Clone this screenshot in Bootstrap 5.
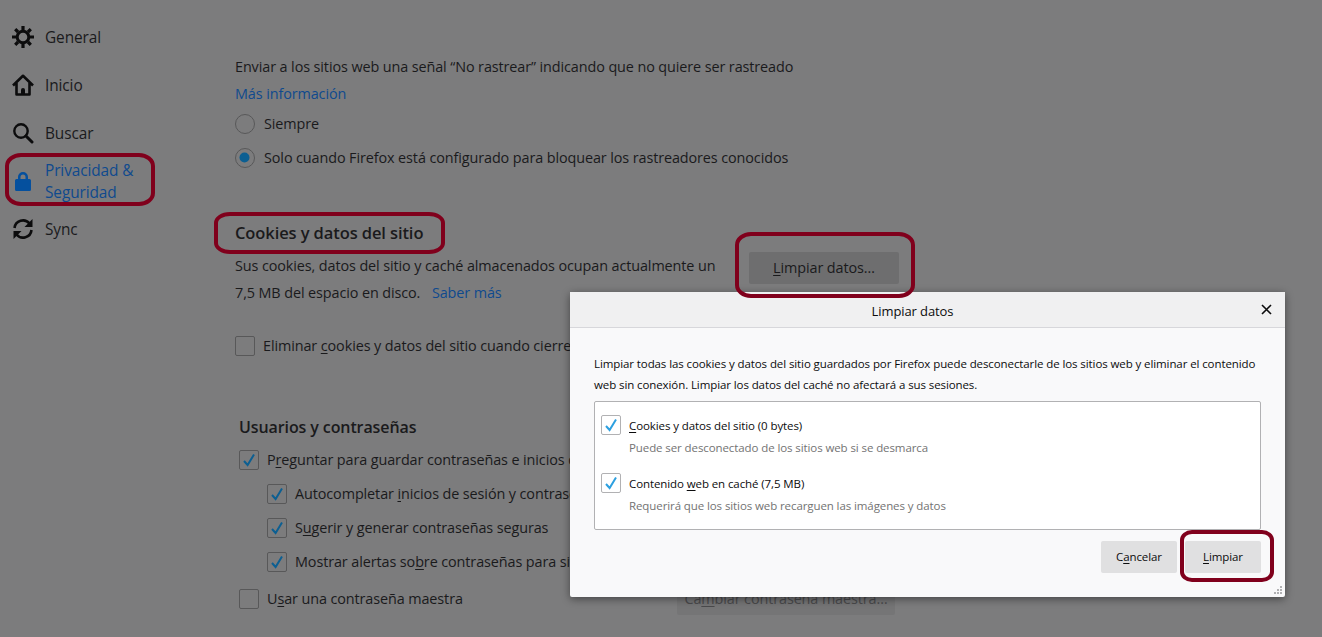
<!DOCTYPE html>
<html lang="es">
<head>
  <meta charset="UTF-8">
  <title>Limpiar datos</title>
  <link href="https://cdn.jsdelivr.net/npm/bootstrap@5.3.0/dist/css/bootstrap.min.css" rel="stylesheet">
  <style>
    html, body { height: 100%; }
    body { background: #7c7c7d; color: #1a1a1c; font: 14.4px/26px "Open Sans", "Liberation Sans", sans-serif; letter-spacing: -.1px; overflow: hidden; }
    a { text-decoration: none; color: #0f4a8e; }
    u { text-underline-offset: 2px; }

    /* sidebar */
    .side-col { width: 235px; padding-top: 13px; flex: none; font-size: 15.400px; }
    .side-item { padding-left: 12px; height: 48px; gap: 11px; }
    .side-item svg { width: 22px; height: 22px; flex: none; }
    .side-item span { padding-top: 2px; }
    .side-item.is-active { height: 46px; margin: 1px 0; color: #0f4a8e; line-height: 22px; }

    /* main column */
    .main-col { padding-top: 54px; width: 700px; flex: none; }
    .line-r { height: 26px; }
    .line-top { height: 27px; }
    .opt-r { height: 34px; gap: 9px; }
    .head-r { height: 30px; font-size: 16.500px; font-weight: 600; margin-top: 45px; margin-bottom: 3px; }
    .store-r { width: 664px; }
    .erase-r { margin-top: 23px; }
    .sec-users { padding-left: 4px; margin-top: 50px; width: 660px; }
    .sec-users .head-r { margin: 0; font-size: 16px; padding-top: 1px; }
    .sub-r { padding-left: 28px; }
    .master-r { margin-top: 3px; }
    .master-l { gap: 9px; }
    .plain-btn { background: #6e6e6f; border-radius: 2px; height: 32px; line-height: 32px; text-align: center; }
    .btn-clear { width: 150px; margin-top: -1px; }
    .btn-master { width: 218px; background: #757576; color: #4a4a4c; }

    /* checkbox and radio */
    .form-check-input.tick { width: 20px; height: 20px; margin: 0 -1px 0 0; flex: none; border: 1px solid #585859; border-radius: 2px; background-color: transparent; box-shadow: none; }
    .form-check-input.tick:checked { background-color: transparent; background-size: 18px; background-image: url("data:image/svg+xml,%3Csvg xmlns='http://www.w3.org/2000/svg' viewBox='0 0 18 18'%3E%3Cpath d='M4 10l3.600 4L14 3.500' fill='none' stroke='%230c5f92' stroke-width='2'/%3E%3C/svg%3E"); }
    .form-check-input.dot { width: 20px; height: 20px; margin: 0; flex: none; border: 1px solid #585859; background-color: transparent; background-image: none; box-shadow: none; }
    .form-check-input.dot:checked { background-color: transparent; background-size: 20px; background-image: url("data:image/svg+xml,%3Csvg xmlns='http://www.w3.org/2000/svg' viewBox='0 0 20 20'%3E%3Ccircle cx='9.500' cy='9.500' r='5' fill='%230c5f92'/%3E%3C/svg%3E"); }

    /* dialog */
    .clear-dialog { position: absolute; left: 570px; top: 292px; width: 715px; height: 305px; background: #f9f9fa; color: #0c0c0d; box-shadow: 0 2px 8px rgba(0, 0, 0, .45); border-radius: 2px; font-size: 11.500px; line-height: 21px; letter-spacing: -.095px; }
    .dlg-title { height: 36px; padding: 3px 30px 0 0; background: #f0f0f1; border-bottom: 1px solid #d7d7db; font-size: 13px; font-weight: 500; }
    .dlg-close { position: absolute; right: 13px; top: 12px; width: 11px; height: 11px; }
    .dlg-body { padding: 25px 24px 0; }
    .dlg-box { height: 129px; margin-top: 6px; padding: 12px 6px 0; background: #fff; border: 1px solid #b1b1b3; border-radius: 2px; }
    .dlg-opt { gap: 8px; height: 22px; margin-bottom: 1px; }
    .dlg-note { padding-left: 28px; height: 22px; color: #737373; margin-bottom: 13px; }
    .dlg-box .form-check-input.tick { border-color: #b1b1b3; margin-right: 0; }
    .dlg-box .form-check-input.tick:checked { background-image: url("data:image/svg+xml,%3Csvg xmlns='http://www.w3.org/2000/svg' viewBox='0 0 18 18'%3E%3Cpath d='M4 10l3.600 4L14 3.500' fill='none' stroke='%232da0e0' stroke-width='2'/%3E%3C/svg%3E"); }
    .dlg-foot { gap: 8px; margin-top: 11px; }
    .dlg-btn { width: 76px; height: 32px; line-height: 32px; text-align: center; background: #e0e0e1; border-radius: 2px; }
    .dlg-grip { position: absolute; right: 2px; bottom: 2px; width: 10px; height: 10px; }

    /* red marks drawn on the capture */
    .red-mark { position: absolute; border: 4px solid #80001c; }
    .mark-side { left: 5px; top: 153px; width: 150px; height: 53px; border-radius: 16px / 13px; }
    .mark-head { left: 214px; top: 212px; width: 231px; height: 42px; border-radius: 16px / 11px; }
    .mark-clear { left: 735px; top: 232px; width: 180px; height: 66px; border-radius: 16px / 13px; }
    .mark-ok { left: 1180px; top: 530px; width: 94px; height: 52px; border-radius: 12px / 10px; }
  </style>
</head>
<body>
  <div class="d-flex">
    <!-- menu lateral -->
    <div class="side-col">
      <div class="side-item d-flex align-items-center">
        <svg viewBox="0 0 22 22"><circle cx="11" cy="11" r="5.800" fill="none" stroke="#0c0c0d" stroke-width="3"/><path stroke="#0c0c0d" stroke-width="3.200" d="M11 0v4M11 18v4M0 11h4M18 11h4M3.200 3.200 6 6M16 16l2.800 2.800M18.800 3.200 16 6M6 16l-2.800 2.800"/></svg>
        <span>General</span>
      </div>
      <div class="side-item d-flex align-items-center">
        <svg viewBox="0 0 22 22"><path fill="none" stroke="#0c0c0d" stroke-width="2.600" stroke-linejoin="round" d="M1 11.500 11 1.800l10 9.700M4.500 9v11.500h13V9"/><path fill="#0c0c0d" d="M9 21v-5a2 2 0 0 1 4 0v5z"/></svg>
        <span>Inicio</span>
      </div>
      <div class="side-item d-flex align-items-center">
        <svg viewBox="0 0 22 22"><circle cx="9" cy="9" r="6.700" fill="none" stroke="#0c0c0d" stroke-width="2.400"/><path stroke="#0c0c0d" stroke-width="3" stroke-linecap="round" d="m14 14 6 6"/></svg>
        <span>Buscar</span>
      </div>
      <div class="side-item is-active d-flex align-items-center">
        <svg viewBox="0 0 22 22"><path fill="#05509e" d="M6 9V7a5 5 0 0 1 10 0v2h1.500A1.500 1.500 0 0 1 19 10.500v9a1.500 1.500 0 0 1-1.500 1.500h-13A1.500 1.500 0 0 1 3 19.500v-9A1.500 1.500 0 0 1 4.500 9zm2.500 0h5V7a2.500 2.500 0 0 0-5 0z"/></svg>
        <span>Privacidad &amp;<br>Seguridad</span>
      </div>
      <div class="side-item d-flex align-items-center">
        <svg viewBox="0 0 22 22"><path fill="none" stroke="#0c0c0d" stroke-width="2.600" d="M2.500 10a8.500 8.500 0 0 1 15-4.500M19.500 12a8.500 8.500 0 0 1-15 4.500"/><path fill="#0c0c0d" d="M20.500 1v8h-8zM1.500 21v-8h8z"/></svg>
        <span>Sync</span>
      </div>
    </div>

    <!-- contenido -->
    <div class="main-col">
      <div class="line-top">Enviar a los sitios web una señal “No rastrear” indicando que no quiere ser rastreado</div>
      <div class="line-r"><a href="#">Más información</a></div>
      <div class="opt-r d-flex align-items-center">
        <input class="form-check-input dot" type="radio" name="dnt">
        <span>Siempre</span>
      </div>
      <div class="opt-r d-flex align-items-center">
        <input class="form-check-input dot" type="radio" name="dnt" checked>
        <span>Solo cuando Firefox está configurado para bloquear los rastreadores conocidos</span>
      </div>

      <div class="head-r">Cookies y datos del sitio</div>
      <div class="store-r d-flex justify-content-between">
        <div>
          <div class="line-top">Sus cookies, datos del sitio y caché almacenados ocupan actualmente un</div>
          <div class="line-r">7,5 MB del espacio en disco. <a href="#" class="ms-2">Saber más</a></div>
        </div>
        <div class="plain-btn btn-clear"><u>L</u>impiar datos…</div>
      </div>
      <div class="opt-r erase-r d-flex align-items-center">
        <input class="form-check-input tick" type="checkbox">
        <span>Eliminar <u>c</u>ookies y datos del sitio cuando cierre Firefox</span>
      </div>

      <div class="sec-users">
        <div class="head-r">Usuarios y contraseñas</div>
        <div class="opt-r d-flex align-items-center">
          <input class="form-check-input tick" type="checkbox" checked>
          <span>P<u>r</u>eguntar para guardar contraseñas e inicios de sesión</span>
        </div>
        <div class="opt-r sub-r d-flex align-items-center">
          <input class="form-check-input tick" type="checkbox" checked>
          <span>Autocompletar <u>i</u>nicios de sesión y contraseñas</span>
        </div>
        <div class="opt-r sub-r d-flex align-items-center">
          <input class="form-check-input tick" type="checkbox" checked>
          <span>S<u>u</u>gerir y generar contraseñas seguras</span>
        </div>
        <div class="opt-r sub-r d-flex align-items-center">
          <input class="form-check-input tick" type="checkbox" checked>
          <span>Mostrar alertas so<u>b</u>re contraseñas para sitios</span>
        </div>
        <div class="opt-r master-r d-flex align-items-center justify-content-between">
          <div class="master-l d-flex align-items-center">
            <input class="form-check-input tick" type="checkbox">
            <span>U<u>s</u>ar una contraseña maestra</span>
          </div>
          <div class="plain-btn btn-master">Ca<u>m</u>biar contraseña maestra…</div>
        </div>
      </div>
    </div>
  </div>

  <!-- dialogo -->
  <div class="clear-dialog">
    <div class="dlg-title d-flex align-items-center justify-content-center">Limpiar datos</div>
    <svg class="dlg-close" viewBox="0 0 11 11"><path stroke="#0c0c0d" stroke-width="1.600" d="m1 1 9 9M10 1l-9 9"/></svg>
    <div class="dlg-body">
      <div>Limpiar todas las cookies y datos del sitio guardados por Firefox puede desconectarle de los sitios web y eliminar el contenido<br>web sin conexión. Limpiar los datos del caché no afectará a sus sesiones.</div>
      <div class="dlg-box">
        <div class="dlg-opt d-flex align-items-center">
          <input class="form-check-input tick" type="checkbox" checked>
          <span><u>C</u>ookies y datos del sitio (0 bytes)</span>
        </div>
        <div class="dlg-note">Puede ser desconectado de los sitios web si se desmarca</div>
        <div class="dlg-opt d-flex align-items-center">
          <input class="form-check-input tick" type="checkbox" checked>
          <span>Contenido <u>w</u>eb en caché (7,5 MB)</span>
        </div>
        <div class="dlg-note">Requerirá que los sitios web recarguen las imágenes y datos</div>
      </div>
      <div class="dlg-foot d-flex justify-content-end">
        <div class="dlg-btn">C<u>a</u>ncelar</div>
        <div class="dlg-btn"><u>L</u>impiar</div>
      </div>
    </div>
    <svg class="dlg-grip" viewBox="0 0 10 10"><path fill="#b1b1b3" d="M7 1h2v2H7zM4 4h2v2H4zM7 4h2v2H7zM1 7h2v2H1zM4 7h2v2H4zM7 7h2v2H7z"/></svg>
  </div>

  <div class="red-mark mark-side"></div>
  <div class="red-mark mark-head"></div>
  <div class="red-mark mark-clear"></div>
  <div class="red-mark mark-ok"></div>
  <script src="https://cdn.jsdelivr.net/npm/bootstrap@5.3.0/dist/js/bootstrap.bundle.min.js"></script>
</body>
</html>
